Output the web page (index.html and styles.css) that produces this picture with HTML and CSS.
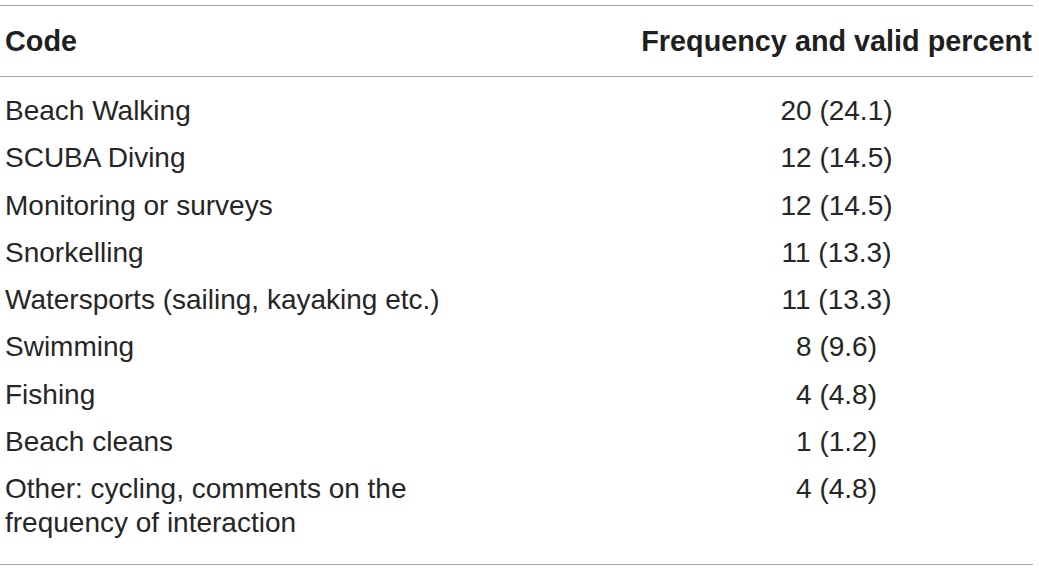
FILE: index.html
```html
<!DOCTYPE html>
<html lang="en">
<head>
<meta charset="utf-8">
<title>Code frequencies</title>
<link rel="stylesheet" href="styles.css">
</head>
<body>
<table class="freq-table">
  <colgroup>
    <col class="col-code">
    <col class="col-freq">
  </colgroup>
  <thead>
    <tr>
      <th class="cell-code">Code</th>
      <th class="cell-freq">Frequency and valid percent</th>
    </tr>
  </thead>
  <tbody>
    <tr><td class="cell-code">Beach Walking</td><td class="cell-freq">20 (24.1)</td></tr>
    <tr><td class="cell-code">SCUBA Diving</td><td class="cell-freq">12 (14.5)</td></tr>
    <tr><td class="cell-code">Monitoring or surveys</td><td class="cell-freq">12 (14.5)</td></tr>
    <tr><td class="cell-code">Snorkelling</td><td class="cell-freq">11 (13.3)</td></tr>
    <tr><td class="cell-code">Watersports (sailing, kayaking etc.)</td><td class="cell-freq">11 (13.3)</td></tr>
    <tr><td class="cell-code">Swimming</td><td class="cell-freq">8 (9.6)</td></tr>
    <tr><td class="cell-code">Fishing</td><td class="cell-freq">4 (4.8)</td></tr>
    <tr><td class="cell-code">Beach cleans</td><td class="cell-freq">1 (1.2)</td></tr>
    <tr><td class="cell-code"><span class="wrap-text">Other: cycling, comments on the frequency of interaction</span></td><td class="cell-freq">4 (4.8)</td></tr>
  </tbody>
</table>
</body>
</html>
```

FILE: styles.css
```css
html, body {
  margin: 0;
  padding: 0;
  background: #ffffff;
}

body {
  font-family: "Liberation Sans", Arial, sans-serif;
  color: #262626;
  padding-top: 5px;
}

.freq-table {
  width: 1033px;
  border-collapse: collapse;
  table-layout: fixed;
  border-top: 1px solid #a3a3a3;
  border-bottom: 1px solid #a3a3a3;
}

.col-code {
  width: 640px;
}

.col-freq {
  width: 393px;
}

.freq-table th {
  font-size: 28.8px;
  line-height: 1.2;
  font-weight: bold;
  color: #1f1f1f;
  padding: 17.5px 5px;
  border-bottom: 1px solid #a3a3a3;
  white-space: nowrap;
}

.freq-table td {
  font-size: 28px;
  line-height: 1.2;
  font-weight: normal;
  padding: 6.85px 5px;
  vertical-align: top;
}

.cell-code {
  text-align: left;
}

.cell-freq {
  text-align: center;
}

.freq-table th.cell-freq {
  padding-left: 0;
  padding-right: 0;
}

.freq-table tbody tr:first-child td {
  padding-top: 17.5px;
}

.freq-table tbody tr:last-child td {
  padding-bottom: 24.5px;
}

.wrap-text {
  display: block;
  max-width: 420px;
}
```
